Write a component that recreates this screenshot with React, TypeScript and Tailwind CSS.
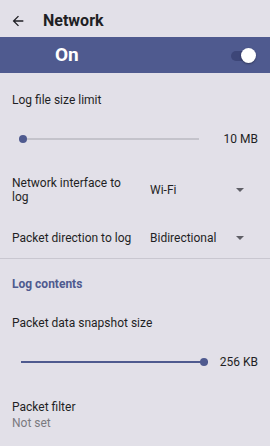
import React from "react";

const Caret = () => (
  <svg width="8" height="4" viewBox="0 0 8 4" className="block">
    <path d="M0 0 L8 0 L4 4 Z" fill="#5f5f66" />
  </svg>
);

export default function App() {
  return (
    <div
      className="w-[270px] h-[446px] bg-[#e2e0e8] text-[#1f1f24] overflow-hidden"
      style={{ fontFamily: "Roboto, 'Liberation Sans', sans-serif" }}
    >
      {/* top bar */}
      <div className="h-[37px] pt-[4px] flex items-center">
        <svg width="16" height="16" viewBox="0 0 24 24" className="ml-[10px]">
          <path d="M20 11H7.83l5.59-5.59L12 4l-8 8 8 8 1.41-1.41L7.83 13H20v-2z" fill="#1f1f24" />
        </svg>
        <span className="ml-[17px] text-[16px] font-bold">Network</span>
      </div>
      {/* On bar */}
      <div className="h-[36px] bg-[#4f5a8f] flex items-center justify-between">
        <span className="ml-[55px] text-[19px] font-bold text-white">On</span>
        <div className="relative w-[26px] h-[16px] mr-[14px]">
          <div className="absolute left-[1px] top-[4px] w-[20px] h-[10px] rounded-full bg-[#3d4678]" />
          <div className="absolute right-0 top-[1px] w-[15px] h-[15px] rounded-full bg-white shadow-[0_1px_2px_rgba(0,0,0,0.35)]" />
        </div>
      </div>
      {/* Log file size limit */}
      <div className="h-[28px] mt-[13px] flex items-center pl-[12px] text-[12px]">Log file size limit</div>
      <div className="h-[20px] mt-[15px] flex items-center">
        <div className="relative ml-[19px] w-[180px] h-[10px] flex items-center">
          <div className="w-full h-[2px] bg-[#c4c3cb]" />
          <div className="absolute left-0 top-[1px] w-[8px] h-[8px] rounded-full bg-[#4f5a8f]" />
        </div>
        <span className="ml-auto mr-[12px] text-[12px]">10 MB</span>
      </div>
      {/* Network interface */}
      <div className="mt-[25px] flex items-center h-[32px]">
        <div className="w-[150px] pl-[12px] text-[12px] leading-[14px]">Network interface to<br />log</div>
        <div className="flex-1 flex items-center text-[12px]">
          <span>Wi-Fi</span>
          <span className="ml-auto mr-[26px]"><Caret /></span>
        </div>
      </div>
      {/* Packet direction */}
      <div className="mt-[22px] flex items-center h-[20px]">
        <div className="w-[150px] pl-[12px] text-[12px]">Packet direction to log</div>
        <div className="flex-1 flex items-center text-[12px]">
          <span>Bidirectional</span>
          <span className="ml-auto mr-[26px]"><Caret /></span>
        </div>
      </div>
      <div className="mt-[10px] h-[1px] bg-[#c9c7d0]" />
      {/* Log contents */}
      <div className="mt-[18px] h-[14px] flex items-center pl-[12px] text-[12px] font-bold text-[#4f5a8f]">Log contents</div>
      <div className="mt-[24px] h-[16px] flex items-center pl-[12px] text-[12px]">Packet data snapshot size</div>
      <div className="h-[20px] mt-[21px] flex items-center">
        <div className="relative ml-[21px] w-[187px] h-[10px] flex items-center">
          <div className="w-full h-[2px] bg-[#4f5a8f]" />
          <div className="absolute right-0 top-[1px] w-[8px] h-[8px] rounded-full bg-[#4f5a8f]" />
        </div>
        <span className="ml-auto mr-[12px] text-[12px]">256 KB</span>
      </div>
      <div className="mt-[27px] pl-[12px] text-[12px] leading-[16px]">Packet filter</div>
      <div className="pl-[12px] text-[12px] leading-[16px] text-[#7b7a80]">Not set</div>
    </div>
  );
}
